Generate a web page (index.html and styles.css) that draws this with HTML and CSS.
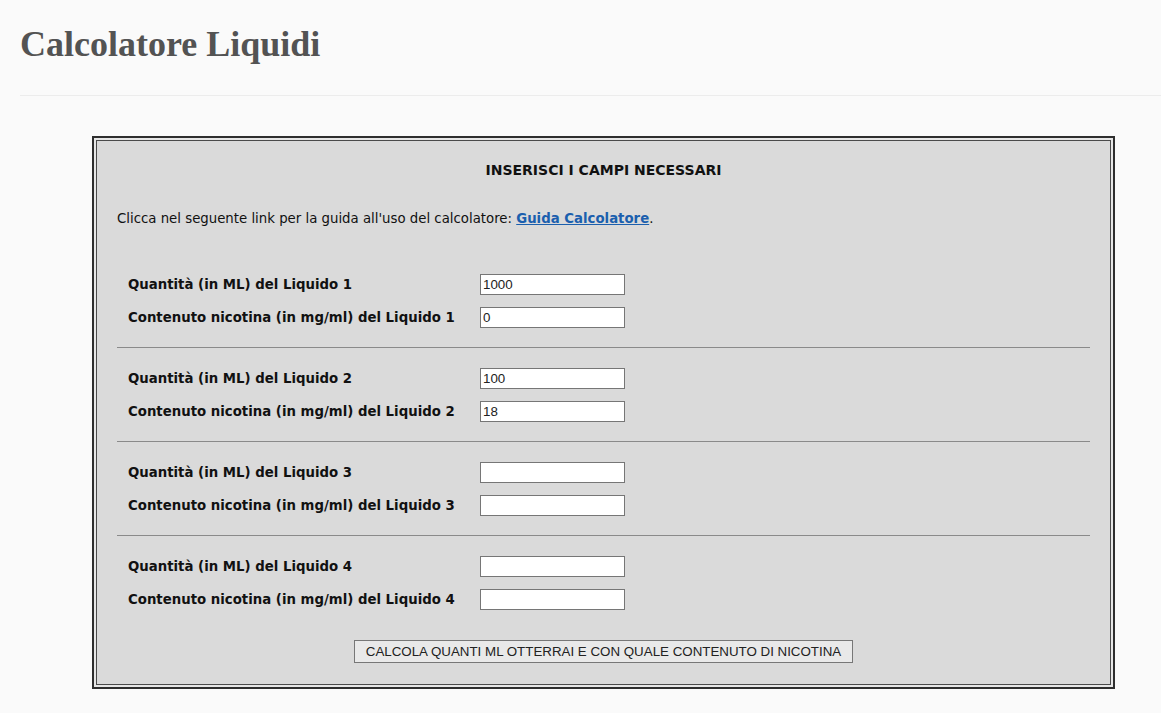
FILE: index.html
```html
<!DOCTYPE html>
<html lang="it">
<head>
<meta charset="utf-8">
<title>Calcolatore Liquidi</title>
<link rel="stylesheet" href="styles.css">
</head>
<body>
<header class="page-head">
  <h1 class="page-title">Calcolatore Liquidi</h1>
</header>
<main class="content">
  <div class="calc-outer">
    <div class="calc">
      <h2 class="calc-title">INSERISCI I CAMPI NECESSARI</h2>
      <p class="calc-intro">Clicca nel seguente link per la guida all'uso del calcolatore: <a class="guide-link" href="#">Guida Calcolatore</a>.</p>
      <div class="groups">
        <div class="group">
          <label class="lbl">Quantità (in ML) del Liquido 1</label><input class="fld" type="text" value="1000">
          <label class="lbl">Contenuto nicotina (in mg/ml) del Liquido 1</label><input class="fld" type="text" value="0">
        </div>
        <hr class="sep">
        <div class="group">
          <label class="lbl">Quantità (in ML) del Liquido 2</label><input class="fld" type="text" value="100">
          <label class="lbl">Contenuto nicotina (in mg/ml) del Liquido 2</label><input class="fld" type="text" value="18">
        </div>
        <hr class="sep">
        <div class="group">
          <label class="lbl">Quantità (in ML) del Liquido 3</label><input class="fld" type="text" value="">
          <label class="lbl">Contenuto nicotina (in mg/ml) del Liquido 3</label><input class="fld" type="text" value="">
        </div>
        <hr class="sep">
        <div class="group">
          <label class="lbl">Quantità (in ML) del Liquido 4</label><input class="fld" type="text" value="">
          <label class="lbl">Contenuto nicotina (in mg/ml) del Liquido 4</label><input class="fld" type="text" value="">
        </div>
      </div>
      <div class="actions">
        <button class="calc-btn" type="button">CALCOLA QUANTI ML OTTERRAI E CON QUALE CONTENUTO DI NICOTINA</button>
      </div>
    </div>
  </div>
</main>
</body>
</html>
```
FILE: styles.css
```css
html, body {
  margin: 0;
  padding: 0;
  background: #fafafa;
}
body {
  font-family: "DejaVu Sans", Verdana, sans-serif;
  color: #111;
}
.page-head {
  margin-left: 20px;
  border-bottom: 1px solid #ececec;
  height: 96px;
  box-sizing: border-box;
}
.page-title {
  margin: 0;
  padding-top: 22px;
  font-family: "Liberation Serif", "DejaVu Serif", serif;
  font-weight: bold;
  font-size: 36px;
  line-height: 44px;
  color: #535353;
}
.content {
  padding: 40px 46px 0 92px;
}
.calc-outer {
  border: 2px solid #2e2e2e;
  padding: 2px;
  background: #e6e6e6;
}
.calc {
  border: 1px solid #4a4a4a;
  background: #dadada;
  padding: 0 20px 21px 20px;
}
.calc-title {
  margin: 0;
  padding-top: 21px;
  text-align: center;
  font-size: 14px;
  line-height: 16px;
  font-weight: bold;
}
.calc-intro {
  margin: 33px 0 0 0;
  font-size: 13.3px;
  line-height: 16px;
}
.guide-link {
  color: #1b5fae;
  font-weight: bold;
}
.groups {
  margin-top: 41px;
}
.group {
  display: grid;
  grid-template-columns: 352px 145px;
  grid-auto-rows: 33px;
  align-items: center;
  padding-left: 11px;
}
.lbl {
  font-size: 13.3px;
  font-weight: bold;
  line-height: 16px;
}
.fld {
  box-sizing: border-box;
  width: 145px;
  height: 21px;
  margin: 0;
  padding: 1px 2px;
  border: 1px solid #767676;
  background: #fff;
  font-family: "Liberation Sans", Arial, sans-serif;
  font-size: 13.33px;
  color: #222;
}
.sep {
  margin: 13px 0 14px 0;
  border: 0;
  border-top: 1px solid #8a8a8a;
  height: 0;
}
.actions {
  display: flex;
  justify-content: center;
  margin-top: 24px;
}
.calc-btn {
  box-sizing: border-box;
  height: 23px;
  padding: 0 11px;
  border: 1px solid #777;
  background: #e9e9e9;
  font-family: "Liberation Sans", Arial, sans-serif;
  font-size: 13.33px;
  color: #222;
}
```
